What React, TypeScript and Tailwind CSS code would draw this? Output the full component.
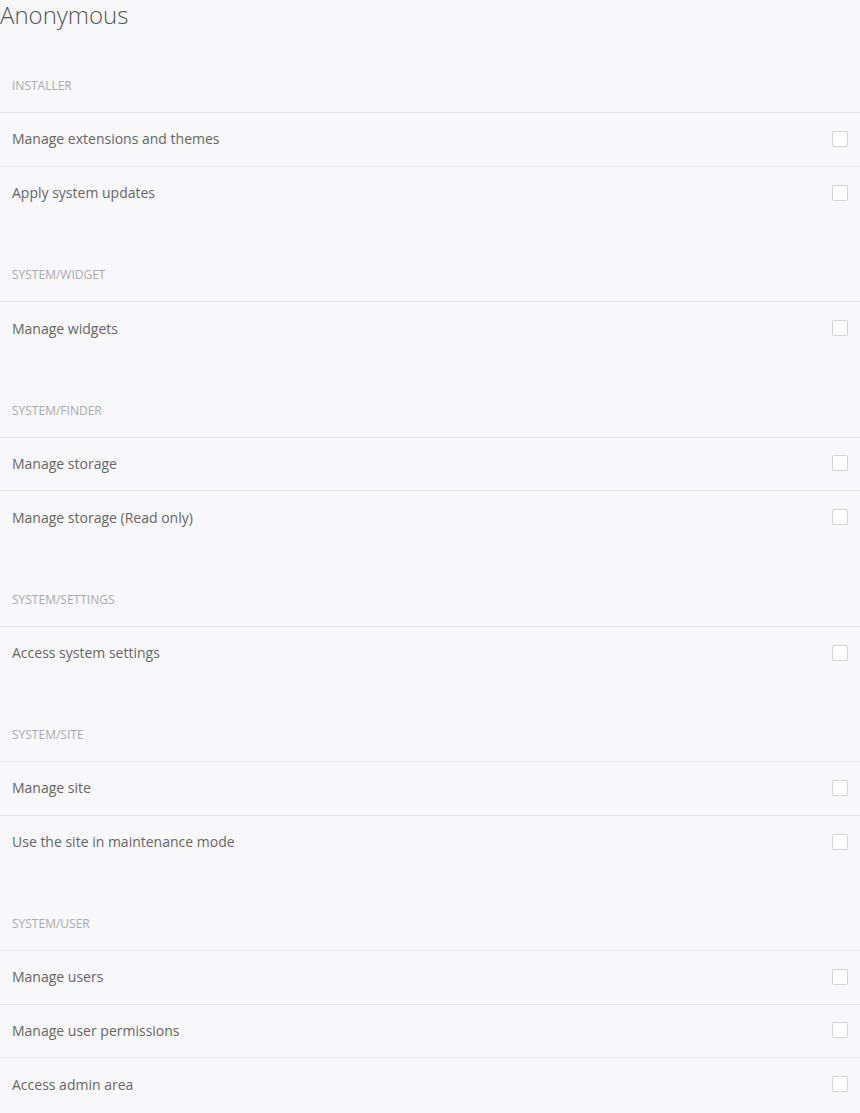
const groups: { name: string; perms: string[] }[] = [
  { name: "Installer", perms: ["Manage extensions and themes", "Apply system updates"] },
  { name: "System/Widget", perms: ["Manage widgets"] },
  { name: "System/Finder", perms: ["Manage storage", "Manage storage (Read only)"] },
  { name: "System/Settings", perms: ["Access system settings"] },
  { name: "System/Site", perms: ["Manage site", "Use the site in maintenance mode"] },
  { name: "System/User", perms: ["Manage users", "Manage user permissions", "Access admin area"] },
];

const App = () => {
  return (
    <div className="min-h-[1113px] bg-[#f8f8fa] font-['Open_Sans',sans-serif] text-[#666]">
      <h1 className="h-[31px] text-[24px] leading-[30px] font-light text-[#555]">Anonymous</h1>
      {groups.map((group) => (
        <div key={group.name}>
          {/* group header */}
          <div className="h-[82px] flex items-end px-3 pb-[18px] border-b border-[#e5e5e8]">
            <span className="text-[12px] leading-4 uppercase text-[#aaa]">{group.name}</span>
          </div>
          {group.perms.map((perm, i) => (
            <label
              key={perm}
              className={`flex items-center justify-between h-[53.5px] px-3 pb-px ${
                i < group.perms.length - 1 ? "border-b border-[#e5e5e8]" : ""
              }`}
            >
              <span className="text-[14px] text-[#666]">{perm}</span>
              <span className="w-4 h-4 rounded-[2px] border border-[#d4d4d6] bg-white" />
            </label>
          ))}
        </div>
      ))}
    </div>
  );
};

export default App;
